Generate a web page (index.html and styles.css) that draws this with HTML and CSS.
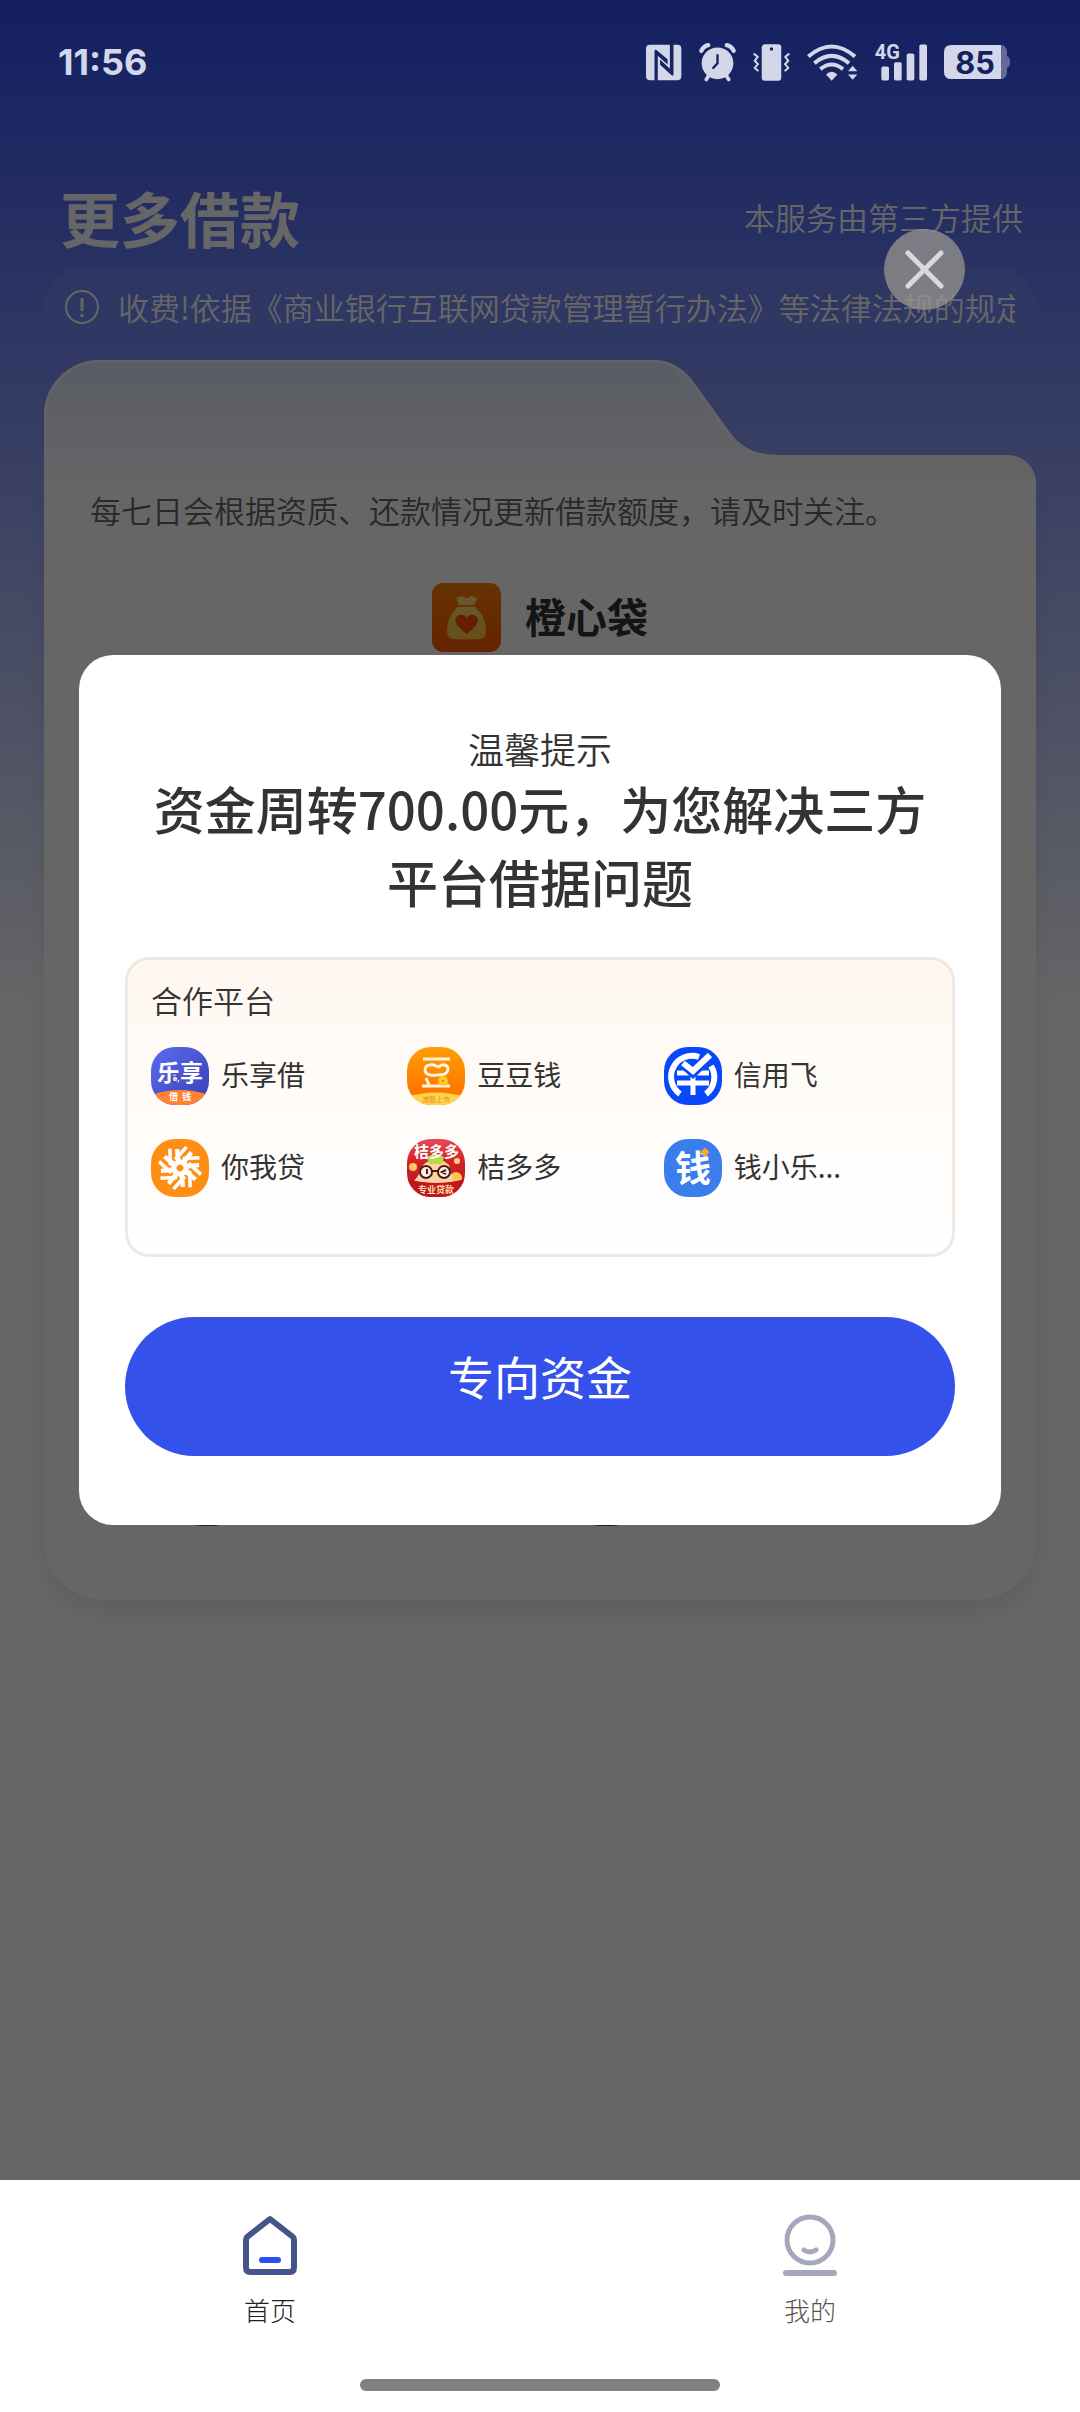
FILE: index.html
```html
<!DOCTYPE html>
<html lang="zh-CN">
<head>
<meta charset="utf-8">
<meta name="viewport" content="width=device-width, initial-scale=1">
<title>更多借款</title>
<link rel="stylesheet" href="styles.css">
</head>
<body>
<div class="app">
  <header class="status">
    <time class="status-time">11:56</time>
    <div class="status-icons">
      <svg width="36" height="37" viewBox="80 71 110 110" aria-label="NFC">
        <path fill="currentColor" fill-rule="evenodd" d="M92 72H153V145L123 117V133L158 165Q164 169 164 160V72H176Q188 72 188 84V168Q188 180 176 180H116V105L146 132V116L112 88Q106 84 106 92V180H92Q80 180 80 168V84Q80 72 92 72Z"/>
      </svg>
      <svg width="37" height="38" viewBox="248 68 112 114" aria-label="闹钟">
        <circle cx="304" cy="129" r="48" fill="currentColor"/>
        <g fill="none" stroke="currentColor" stroke-width="11" stroke-linecap="round">
          <path d="M276 168L270 178M332 168L338 178"/>
          <path d="M255 91Q262 77 276 74M353 91Q346 77 332 74" stroke-width="13"/>
        </g>
        <path class="ink-line" d="M304 104V129L291 143" stroke-width="7"/>
      </svg>
      <svg width="37" height="37" viewBox="413 71 110 110" aria-label="振动">
        <rect x="439" y="72" width="58" height="108" rx="9" fill="currentColor"/>
        <circle class="ink" cx="468" cy="86" r="5"/>
        <path fill="none" stroke="currentColor" stroke-width="6" stroke-linecap="round" stroke-linejoin="round" d="M417 101L427 109L418 121L428 131L418 142L427 150M519 101L509 109L518 121L508 131L518 142L509 150"/>
      </svg>
      <svg width="51" height="37" viewBox="574 70 153 110" aria-label="无线网络">
        <g fill="none" stroke="currentColor" stroke-width="12">
          <path d="M578 107Q648 47 718 107"/>
          <path d="M596 127Q648 83 700 127"/>
          <path d="M614 145Q648 117 682 145"/>
        </g>
        <path fill="currentColor" d="M631 161Q648 145 665 161L648 180ZM697 151L711 135L725 151ZM697 161L711 177L725 161Z"/>
      </svg>
      <svg width="52" height="38" viewBox="767 68 156 113" aria-label="4G 信号">
        <text class="net" x="766" y="115">4G</text>
        <g fill="currentColor">
          <rect x="786" y="138" width="23" height="42" rx="5"/>
          <rect x="824" y="125" width="23" height="55" rx="5"/>
          <rect x="862" y="99" width="23" height="81" rx="5"/>
          <rect x="900" y="72" width="23" height="108" rx="5"/>
        </g>
      </svg>
      <svg width="66" height="34" viewBox="972 78 198 102" aria-label="电量 85%">
        <path fill="currentColor" opacity=".4" d="M1143 78Q1158 78 1161 96V112Q1170 114 1170 129Q1170 144 1161 146V162Q1158 180 1143 180Z"/>
        <path fill="currentColor" d="M994 78H1143V180H994Q972 180 972 158V100Q972 78 994 78Z"/>
        <text class="battery" x="1006" y="164">85</text>
      </svg>
    </div>
  </header>

  <main class="page">
    <div class="head">
      <h1 class="head-title">更多借款</h1>
      <p class="head-note">本服务由第三方提供</p>
    </div>
    <div class="notice">
      <svg class="notice-icon" viewBox="0 0 36 36" aria-hidden="true">
        <circle cx="18" cy="18" r="16" fill="none" stroke="currentColor" stroke-width="2"/>
        <path d="M18 9V22M18 25V28" stroke="currentColor" stroke-width="3" fill="none"/>
      </svg>
      <p class="notice-text">收费!依据《商业银行互联网贷款管理暂行办法》等法律法规的规定</p>
    </div>

    <section class="card">
      <svg class="card-tab" viewBox="0 0 992 120" preserveAspectRatio="none" aria-hidden="true">
        <defs>
          <linearGradient id="tabFill" x1="0" y1="0" x2="0" y2="1">
            <stop offset="0" stop-color="#e0e5fb"/>
            <stop offset="1" stop-color="#fdfdff"/>
          </linearGradient>
        </defs>
        <path fill="url(#tabFill)" d="M0 120V56A56 56 0 0 1 56 0H608C624 0 637 6 648 20L684 70C696 87 710 95 732 95H964A28 28 0 0 1 992 123Z"/>
        <path fill="none" stroke="#fff" stroke-opacity=".6" stroke-width="3" d="M1 120V56A55 55 0 0 1 56 1H608C624 1 636 7 647 21L683 71C695 88 709 96 732 96"/>
      </svg>
      <div class="card-body">
        <p class="card-tip">每七日会根据资质、还款情况更新借款额度，请及时关注。</p>
        <div class="brand">
          <svg class="brand-logo" viewBox="0 0 207 207" aria-hidden="true">
            <defs>
              <linearGradient id="brandBg" x1="0" y1="0" x2="0" y2="1">
                <stop offset="0" stop-color="#ff8000"/><stop offset="1" stop-color="#fb5a00"/>
              </linearGradient>
              <linearGradient id="bagFill" x1="0" y1="0" x2="0" y2="1">
                <stop offset="0" stop-color="#ffe07a"/><stop offset="1" stop-color="#ffc53a"/>
              </linearGradient>
            </defs>
            <rect width="207" height="207" rx="34" fill="url(#brandBg)"/>
            <path fill="url(#bagFill)" d="M73 41Q82 46 88 40Q96 40 103 46Q112 45 116 40Q124 36 128 44Q134 40 135 47L126 66H80ZM76 71H132L136 80Q160 98 162 140Q164 168 140 169H68Q44 168 45 140Q48 98 70 80Z"/>
            <path fill="#ff4b00" d="M104 153Q70 126 70 114C70 92 97 90 104 104C111 90 138 92 138 114Q138 126 104 153Z"/>
          </svg>
          <h2 class="brand-name">橙心袋</h2>
        </div>
        <div class="partners">
          <span class="partner partner-red"></span>
          <span class="partner partner-blue"></span>
        </div>
      </div>
    </section>
  </main>

  <div class="overlay">
    <button class="close" type="button" aria-label="关闭">
      <svg width="41" height="41" viewBox="0 0 41 41" aria-hidden="true"><path d="M4 4L37 37M37 4L4 37" stroke="currentColor" stroke-width="5" stroke-linecap="round"/></svg>
    </button>
    <section class="modal" role="dialog" aria-labelledby="modal-headline">
      <p class="modal-title">温馨提示</p>
      <h2 class="modal-headline" id="modal-headline">资金周转700.00元，为您解决三方平台借据问题</h2>
      <div class="platforms">
        <h3 class="platforms-title">合作平台</h3>
        <ul class="platform-list">
          <li class="platform">
            <svg class="logo" viewBox="0 0 58 58" aria-hidden="true">
              <defs><linearGradient id="lx" x1="0" y1="0" x2="1" y2="1"><stop offset="0" stop-color="#5a6cf2"/><stop offset="1" stop-color="#3a3fb4"/></linearGradient></defs>
              <rect width="58" height="58" fill="url(#lx)"/>
              <path d="M0 48Q29 38 58 48V58H0Z" fill="#ff8330"/>
              <text class="logo-bold" x="6" y="34" font-size="23">乐享</text>
              <circle cx="24" cy="32" r="3" fill="#cfd3ff" stroke="#2d3380"/>
              <text class="logo-bold" x="18" y="53" font-size="9">借</text>
              <text class="logo-bold" x="31" y="53" font-size="9">钱</text>
            </svg>
            <span class="platform-name">乐享借</span>
          </li>
          <li class="platform">
            <svg class="logo" viewBox="0 0 58 58" aria-hidden="true">
              <defs><linearGradient id="dd" x1="0" y1="0" x2="0" y2="1"><stop offset="0" stop-color="#ff9f00"/><stop offset="1" stop-color="#ff6a00"/></linearGradient></defs>
              <rect width="58" height="58" fill="url(#dd)"/>
              <path d="M0 50Q29 41 58 50V58H0Z" fill="#ffd64a"/>
              <path d="M16 12H43M15 39H43M19 31L22 38" stroke="#fff3e0" stroke-width="3" fill="none"/>
              <path d="M23 18C28 17 29 20 32 20C35 16 41 18 41 22C41 27 36 28 31 28C25 29 18 28 18 23C18 20 20 18 23 18Z" stroke="#fff3e0" stroke-width="3" fill="none"/>
              <circle cx="36" cy="34" r="5" fill="#ffcb1f"/><rect x="35" y="33" width="2" height="2" fill="#e88300"/>
              <text x="15" y="55" font-size="7" fill="#e88a2a">港股上市</text>
            </svg>
            <span class="platform-name">豆豆钱</span>
          </li>
          <li class="platform">
            <svg class="logo" viewBox="0 0 58 58" aria-hidden="true">
              <rect width="58" height="58" fill="#0748fb"/>
              <path d="M16 47A21 21 0 0 1 35 10M47 19A21 21 0 0 1 42 47" stroke="#fff" stroke-width="6" fill="none"/>
              <path d="M13 26H45M13 36H45M29 26V48" stroke="#fff" stroke-width="5" fill="none"/>
              <path d="M19 17L29 26L47 9" stroke="#0748fb" stroke-width="9" fill="none"/>
              <path d="M19 16L29 24L46 8" stroke="#fff" stroke-width="6" fill="none"/>
            </svg>
            <span class="platform-name">信用飞</span>
          </li>
          <li class="platform">
            <svg class="logo" viewBox="0 0 58 58" aria-hidden="true">
              <defs><path id="blade" d="M29 26L23 19L34 7L37 9L28 19L31 21L39 12L42 15L34 25Z"/></defs>
              <rect width="58" height="58" fill="#ff8e14"/>
              <g fill="#fff">
                <use href="#blade"/>
                <use href="#blade" transform="rotate(45 29 29)"/>
                <use href="#blade" transform="rotate(90 29 29)"/>
                <use href="#blade" transform="rotate(135 29 29)"/>
                <use href="#blade" transform="rotate(180 29 29)"/>
                <use href="#blade" transform="rotate(225 29 29)"/>
                <use href="#blade" transform="rotate(270 29 29)"/>
                <use href="#blade" transform="rotate(315 29 29)"/>
              </g>
            </svg>
            <span class="platform-name">你我贷</span>
          </li>
          <li class="platform">
            <svg class="logo" viewBox="0 0 58 58" aria-hidden="true">
              <defs><linearGradient id="jd" x1="0" y1="0" x2="0" y2="1"><stop offset="0" stop-color="#e84a55"/><stop offset=".4" stop-color="#d42026"/><stop offset="1" stop-color="#b5141a"/></linearGradient></defs>
              <rect width="58" height="58" fill="url(#jd)"/>
              <circle cx="6" cy="28" r="4" fill="#ffc966"/><circle cx="49" cy="39" r="6" fill="#ffc759"/><circle cx="50" cy="22" r="3" fill="#ffd685"/>
              <path d="M7 42Q14 34 16 26Q29 14 42 26Q44 36 47 43Q28 46 7 42Z" fill="#ffd3a3"/>
              <path d="M20 18Q29 12 37 18L35 25H22Z" fill="#b9d84a"/>
              <circle cx="19" cy="33" r="6" fill="#ffeadd" stroke="#43201c" stroke-width="2"/>
              <circle cx="37" cy="33" r="6" fill="#ffeadd" stroke="#43201c" stroke-width="2"/>
              <path d="M25 32H31M20 30V35M39 31L35 33L39 35" stroke="#43201c" stroke-width="2" fill="none"/>
              <path d="M0 40Q29 48 58 40V58H0Z" fill="#c0161c"/>
              <text class="logo-bold" x="7" y="18" font-size="15">桔多多</text>
              <text x="11" y="54" font-size="9" font-weight="700" fill="#ffdca8">专业贷款</text>
            </svg>
            <span class="platform-name">桔多多</span>
          </li>
          <li class="platform">
            <svg class="logo" viewBox="0 0 58 58" aria-hidden="true">
              <rect width="58" height="58" fill="#3a7ded"/>
              <text class="logo-bold" x="11" y="43" font-size="36">钱</text>
              <path d="M41 9L45 13L41 17L37 13Z" fill="#f6a623" stroke="#f6a623" stroke-linejoin="round"/>
            </svg>
            <span class="platform-name">钱小乐...</span>
          </li>
        </ul>
      </div>
      <button class="primary" type="button">专向资金</button>
    </section>
  </div>

  <nav class="tabs">
    <div class="tabs-row">
      <a class="tab tab-active" href="#home">
        <svg width="54" height="62" viewBox="0 0 54 62" aria-hidden="true">
          <path d="M27 5L50 23Q51 24 51 26V53Q51 58 47 58H7Q3 58 3 53V26Q3 24 4 23Z" fill="none" stroke="#46548a" stroke-width="6" stroke-linejoin="round"/>
          <path d="M19 46H35" stroke="#2b50f0" stroke-width="6" stroke-linecap="round"/>
        </svg>
        <span>首页</span>
      </a>
      <a class="tab" href="#mine">
        <svg width="54" height="62" viewBox="0 0 54 62" aria-hidden="true">
          <g fill="none" stroke="#a5a8bd" stroke-linecap="round">
            <circle cx="27" cy="26" r="23" stroke-width="5"/>
            <path d="M21 36Q27 40 33 36" stroke-width="5"/>
            <path d="M3 59H51" stroke-width="6"/>
          </g>
        </svg>
        <span>我的</span>
      </a>
    </div>
    <div class="home-bar"></div>
  </nav>
</div>
</body>
</html>
```
FILE: styles.css
```css
* {
  box-sizing: border-box;
  margin: 0;
  padding: 0;
}

body {
  font-family: "Noto Sans CJK SC", "Noto Sans", sans-serif;
  color: #333;
  background: #fff;
}

svg {
  display: block;
  flex: none;
}

button {
  border: 0;
  font: inherit;
  cursor: pointer;
}

.app {
  position: relative;
  display: flex;
  flex-direction: column;
  min-height: 100vh;
  background: linear-gradient(#304ef3, #fff 1010px) no-repeat;
}

/* status bar */
.status {
  position: relative;
  z-index: 3;
  display: flex;
  align-items: center;
  justify-content: space-between;
  height: 124px;
  padding: 0 70px 0 58px;
  color: #d3d7e9;
}

.status-time {
  font: 700 36px/48px Inter, sans-serif;
}

.status-icons {
  display: flex;
  align-items: center;
  gap: 17px;
}

.status-icons svg {
  overflow: visible;
}

.ink {
  fill: #15215f;
}

.ink-line {
  fill: none;
  stroke: #15215f;
  stroke-linecap: round;
}

.net {
  font: 700 60px Roboto, sans-serif;
  fill: currentColor;
}

.battery {
  font: 700 92px Inter, sans-serif;
  fill: #15215f;
}

/* page behind the dialog */
.page {
  flex: 1;
  padding: 53px 44px 0;
}

.head {
  display: flex;
  align-items: center;
  justify-content: space-between;
  height: 80px;
  padding: 0 13px 0 16px;
  color: #fff;
}

.head-title {
  font-size: 60px;
  line-height: 80px;
}

.head-note,
.notice-text,
.card-tip {
  font-size: 31px;
  font-weight: 350;
  line-height: 40px;
}

.card-tip {
  color: #666;
}

.notice {
  display: flex;
  align-items: center;
  gap: 18px;
  height: 80px;
  margin: 10px 0 13px;
  padding: 0 21px 0 20px;
  border-radius: 40px;
  color: #fff;
  background: linear-gradient(rgba(255, 255, 255, .08), rgba(255, 255, 255, 0));
}

.notice-icon {
  width: 36px;
  height: 36px;
}

.notice-text {
  flex: 1;
  min-width: 0;
  overflow: hidden;
  white-space: nowrap;
}

.card {
  border-radius: 56px 28px 60px 60px;
}

.card-tab {
  width: 100%;
  height: 120px;
}

.card-body {
  display: flex;
  flex-direction: column;
  min-height: 1120px;
  padding: 10px 46px 74px;
  border-radius: 0 0 60px 60px;
  background: #fff;
  box-shadow: 0 12px 20px rgba(0, 0, 0, .08);
}

.brand {
  display: flex;
  align-items: center;
  justify-content: center;
  gap: 24px;
  margin-top: 53px;
}

.brand-logo {
  width: 69px;
  height: 69px;
}

.brand-name {
  padding-bottom: 6px;
  font-size: 41px;
  line-height: 56px;
}

.partners {
  display: flex;
  gap: 339px;
  margin-top: auto;
  padding-left: 87px;
}

.partner {
  width: 60px;
  height: 60px;
  border-radius: 24px;
}

.partner-red {
  background: #b03048;
}

.partner-blue {
  background: #4038c0;
}

/* dialog */
.overlay {
  position: absolute;
  z-index: 2;
  inset: 0 0 232px;
  display: flex;
  align-items: center;
  padding: 0 79px;
  background: rgba(0, 0, 0, .6);
}

.close {
  position: absolute;
  top: 229px;
  right: 115px;
  display: grid;
  place-items: center;
  width: 81px;
  height: 81px;
  border-radius: 50%;
  color: #d8d9de;
  background: rgba(156, 154, 146, .72);
}

.modal {
  width: 100%;
  padding: 69px 46px;
  border-radius: 34px;
  background: #fff;
  text-align: center;
}

.modal-title {
  font-size: 36px;
  font-weight: 350;
  line-height: 48px;
}

.modal-headline {
  padding: 0 24px;
  font-size: 51px;
  font-weight: 500;
  line-height: 73px;
}

.platforms {
  margin: 39px 0 60px;
  padding: 22px 32px 57px 23px;
  border: 3px solid #f2e8e2;
  border-radius: 24px;
  background: linear-gradient(#fff7f0, #fffbf7 40%, #fff);
  text-align: left;
}

.platforms-title {
  font-size: 31px;
  font-weight: 350;
  line-height: 36px;
}

.platform-list {
  display: grid;
  grid-template-columns: repeat(3, 1fr);
  gap: 34px 0;
  margin-top: 29px;
  list-style: none;
}

.platform {
  display: flex;
  align-items: center;
  gap: 12px;
  font-size: 28px;
  line-height: 40px;
}

.platform-name {
  padding-bottom: 4px;
}

.logo {
  width: 58px;
  height: 58px;
  border-radius: 24px;
}

.logo-bold {
  font-weight: 700;
  fill: #fff;
}

.primary {
  display: block;
  width: 100%;
  height: 139px;
  padding-bottom: 24px;
  border-radius: 70px;
  color: #fff;
  background: #3551eb;
  font-size: 46px;
}

/* bottom navigation */
.tabs {
  height: 232px;
  padding-top: 34px;
  background: #fff;
}

.tabs-row {
  display: grid;
  grid-template-columns: 1fr 1fr;
}

.tab {
  display: flex;
  flex-direction: column;
  align-items: center;
  gap: 16px;
  color: #555;
  font-size: 26px;
  font-weight: 300;
  line-height: 36px;
  text-decoration: none;
}

.tab-active {
  color: #222;
}

.home-bar {
  width: 360px;
  height: 12px;
  margin: 51px auto 0;
  border-radius: 6px;
  background: #808080;
}
```
